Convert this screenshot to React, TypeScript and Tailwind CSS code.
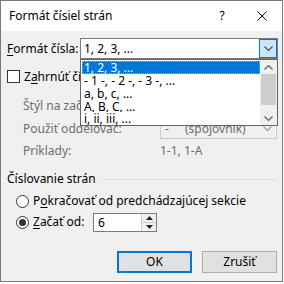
import React from 'react';

const font = { fontFamily: '"Noto Sans", "Open Sans", sans-serif' };

const Chevron: React.FC<{ up?: boolean; className?: string }> = ({ up, className }) => (
  <svg width="9" height="5" viewBox="0 0 9 5" className={className}>
    <path d={up ? 'M0.5 4.5 L4.5 0.5 L8.5 4.5' : 'M0.5 0.5 L4.5 4.5 L8.5 0.5'} fill="none" stroke="currentColor" strokeWidth="1.2" />
  </svg>
);

const Radio: React.FC<{ checked?: boolean }> = ({ checked }) => (
  <span className="w-[13px] h-[13px] rounded-full border border-[#333] bg-white flex items-center justify-center shrink-0">
    {checked && <span className="w-[7px] h-[7px] rounded-full bg-[#333]" />}
  </span>
);

const formats = ['1, 2, 3, ...', '- 1 -, - 2 -, - 3 -, ...', 'a, b, c, ...', 'A, B, C, ...', 'i, ii, iii, ...'];

export default function App() {
  return (
    <div className="w-[284px] h-[284px] bg-white text-[12px] text-black" style={font}>
      <div className="relative w-[283px] h-[282px] border border-[#7a7a7a] bg-[#f0f0f0] flex flex-col">
        {/* title bar */}
        <div className="h-[30px] bg-white flex items-center pl-[8px] shrink-0">
          <span className="flex-1">Formát čísiel strán</span>
          <span className="w-[20px] text-center mr-[25px]">?</span>
          <svg width="10" height="10" viewBox="0 0 10 10" className="mr-[15px]">
            <path d="M0.5 0.5 L9.5 9.5 M9.5 0.5 L0.5 9.5" stroke="#000" strokeWidth="1" />
          </svg>
        </div>

        <div className="flex flex-col pl-[6px] pr-[4px]">
          {/* number format */}
          <div className="mt-[7px] h-[21px] flex items-center">
            <span className="w-[73px]"><span className="underline underline-offset-2">F</span>ormát čísla:</span>
            <div className="w-[198px] h-[21px] border border-[#7a7a7a] bg-white flex items-center">
              <span className="flex-1 pl-[3px]">1, 2, 3, ...</span>
              <span className="w-[18px] h-[19px] border border-[#0078d7] bg-[#cce4f7] flex items-center justify-center text-[#505050]">
                <Chevron />
              </span>
            </div>
          </div>

          {/* include chapter */}
          <div className="mt-[7px] h-[21px] flex items-center whitespace-nowrap">
            <span className="w-[13px] h-[13px] border border-[#333] bg-white shrink-0" />
            <span className="ml-[4px]">Z<span className="underline underline-offset-2">a</span>hrnúť číslo kapitoly</span>
          </div>

          <div className="mt-[8px] h-[21px] flex items-center text-[#6d6d6d] pl-[16px] whitespace-nowrap">
            <span className="w-[137px]">Štýl na začiatku kapitoly:</span>
            <div className="w-[117px] h-[21px] border border-[#cccccc] bg-[#f0f0f0]" />
          </div>

          <div className="mt-[2px] h-[21px] flex items-center text-[#6d6d6d] pl-[16px] whitespace-nowrap">
            <span className="w-[137px]">Použiť oddeľovač:</span>
            <div className="w-[117px] h-[21px] border border-[#cccccc] bg-[#f0f0f0] flex items-center">
              <span className="pl-[4px] w-[24px]">-</span>
              <span className="flex-1">(spojovník)</span>
              <span className="w-[18px] flex items-center justify-center text-[#a0a0a0]"><Chevron /></span>
            </div>
          </div>

          <div className="mt-[1px] h-[21px] flex items-center text-[#6d6d6d] pl-[16px]">
            <span className="w-[137px]">Príklady:</span>
            <span>1-1, 1-A</span>
          </div>

          {/* page numbering group */}
          <div className="mt-[10px] h-[16px] flex items-center">
            <span>Číslovanie strán</span>
            <span className="flex-1 h-px bg-[#dcdcdc] ml-[6px] mr-[1px]" />
          </div>

          <div className="mt-[4px] h-[20px] flex items-center pl-[9px]">
            <Radio />
            <span className="ml-[4px]">P<span className="underline underline-offset-2">o</span>kračovať od predchádzajúcej sekcie</span>
          </div>

          <div className="mt-[1px] h-[20px] flex items-center pl-[9px]">
            <Radio checked />
            <span className="ml-[4px] w-[60px]"><span className="underline underline-offset-2">Z</span>ačať od:</span>
            <div className="w-[64px] h-[19px] border border-[#7a7a7a] bg-white flex">
              <span className="flex-1 pl-[4px] leading-[17px]">6</span>
              <div className="w-[15px] flex flex-col border-l border-[#cfcfcf]">
                <span className="flex-1 bg-[#f0f0f0] border-b border-[#cfcfcf] flex items-center justify-center">
                  <svg width="7" height="4" viewBox="0 0 7 4"><path d="M0 4 L3.5 0 L7 4 Z" fill="#222" /></svg>
                </span>
                <span className="flex-1 bg-[#f0f0f0] flex items-center justify-center">
                  <svg width="7" height="4" viewBox="0 0 7 4"><path d="M0 0 L3.5 4 L7 0 Z" fill="#222" /></svg>
                </span>
              </div>
            </div>
          </div>

          {/* buttons */}
          <div className="mt-[19px] flex justify-end gap-[10px] pr-[1px]">
            <button className="w-[75px] h-[22px] border-2 border-[#0078d7] bg-[#e1e1e1]">OK</button>
            <button className="w-[75px] h-[22px] border border-[#adadad] bg-[#e1e1e1]">Zrušiť</button>
          </div>
        </div>

        {/* open dropdown list */}
        <div className="absolute left-[79px] top-[58px] w-[198px] h-[67px] border border-[#646464] bg-white flex">
          <div className="flex-1 flex flex-col pt-px pl-px">
            {formats.map((f, i) => (
              <div
                key={f}
                className={
                  i === 0
                    ? 'h-[13px] leading-[11px] pl-[1px] bg-[#0078d7] text-white border border-dotted border-[#f7a13b]'
                    : 'h-[13px] leading-[13px] pl-[2px] whitespace-nowrap overflow-hidden'
                }
              >
                {f}
              </div>
            ))}
          </div>
          <div className="w-[17px] bg-[#f0f0f0] flex flex-col items-center text-[#606060]">
            <span className="h-[14px] flex items-center"><Chevron up /></span>
            <span className="w-[15px] h-[31px] bg-[#cdcdcd]" />
            <span className="flex-1" />
            <span className="h-[14px] flex items-center"><Chevron /></span>
          </div>
        </div>
      </div>
    </div>
  );
}
